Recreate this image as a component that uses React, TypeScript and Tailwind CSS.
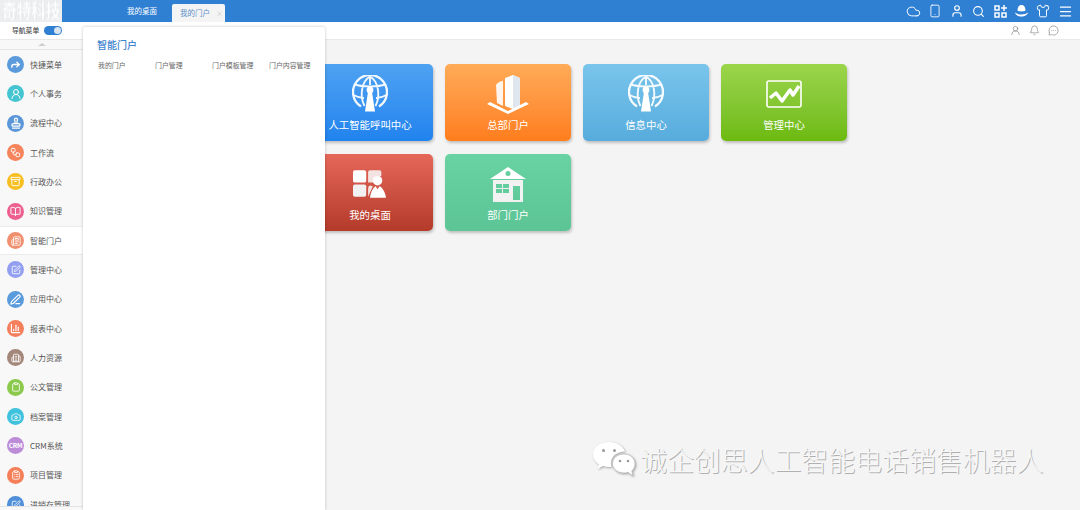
import React from 'react';
import {
  Archive,
  BookOpen,
  Building2,
  Camera,
  ChartColumn,
  Clipboard,
  ClipboardList,
  Cloud,
  Bell,
  Forward,
  Menu,
  MessageCircleMore,
  Newspaper,
  PenLine,
  Search,
  Shirt,
  Smartphone,
  SquarePen,
  Stamp,
  User,
  UserRound,
  Workflow,
} from 'lucide-react';

const menuItems = [
  { label: '快捷菜单', color: 'bg-[#5b9bdc]', icon: <Forward size={11} strokeWidth={3} /> },
  { label: '个人事务', color: 'bg-[#45c4d2]', icon: <UserRound size={12} strokeWidth={2} /> },
  { label: '流程中心', color: 'bg-[#5a96d8]', icon: <Stamp size={12} strokeWidth={2.5} /> },
  { label: '工作流', color: 'bg-[#f5845c]', icon: <Workflow size={11} strokeWidth={2} /> },
  { label: '行政办公', color: 'bg-[#f7bf22]', icon: <Archive size={11} strokeWidth={2} /> },
  { label: '知识管理', color: 'bg-[#ec5f8e]', icon: <BookOpen size={11} strokeWidth={2} /> },
  { label: '智能门户', color: 'bg-[#f0906f]', icon: <Newspaper size={10} strokeWidth={2} />, active: true },
  { label: '管理中心', color: 'bg-[#929ff0]', icon: <SquarePen size={10} strokeWidth={2} /> },
  { label: '应用中心', color: 'bg-[#5a9bdc]', icon: <PenLine size={11} strokeWidth={2.5} /> },
  { label: '报表中心', color: 'bg-[#f47f5c]', icon: <ChartColumn size={11} strokeWidth={2.5} /> },
  { label: '人力资源', color: 'bg-[#a3877b]', icon: <Building2 size={10} strokeWidth={2} /> },
  { label: '公文管理', color: 'bg-[#8bc94d]', icon: <Clipboard size={10} strokeWidth={2} /> },
  { label: '档案管理', color: 'bg-[#3fc2dd]', icon: <Camera size={10} strokeWidth={2} /> },
  { label: 'CRM系统', color: 'bg-[#bd8cd9]', text: 'CRM' },
  { label: '项目管理', color: 'bg-[#f57f59]', icon: <ClipboardList size={10} strokeWidth={2} /> },
  { label: '进销存管理', color: 'bg-[#4f8fd9]', icon: <SquarePen size={10} strokeWidth={2} /> },
];

const subMenu = ['我的门户', '门户管理', '门户模板管理', '门户内容管理'];

const GlobeIcon = () => (
  <svg width="36" height="37" viewBox="0 0 36 37" fill="none" stroke="#fff" strokeOpacity="0.92">
    <path strokeWidth="2.400" d="M9 31.500A17 17 0 1 1 27 31.500" />
    <path strokeWidth="1.900" d="M18 1.500C10 6 7 20 12.500 31M18 1.500C26 6 29 20 23.500 31M18 1.500V10M3 9.500C9 12 27 12 33 9.500M1.500 20C5 22 9 23 12 23M34.500 20C31 22 27 23 24 23" />
    <path fill="#fff" stroke="none" d="M16 17h4l3 19.500H13z" />
    <circle cx="18" cy="15" r="3.400" fill="#fff" stroke="none" />
  </svg>
);

const TowerIcon = () => (
  <svg width="42" height="40" viewBox="0 0 42 40">
    <path fill="#fff" fillOpacity="0.9" d="M9 11q3-4 7-4v25l-6-3z" />
    <path fill="#fff" d="M18 4l8-3 7 3v28l-7 3-8-3z" />
    <path fill="#dfe6ee" d="M26 1l7 3v28l-7 3z" />
    <path fill="#fff" d="M0 30l3-2 18 9 18-9 3 2-21 10z" />
  </svg>
);

const ChartIcon = () => (
  <svg width="36" height="28" viewBox="0 0 36 28" fill="none">
    <rect x="1" y="1" width="34" height="26" rx="2" stroke="#fff" strokeWidth="1.600" />
    <path stroke="#fff" strokeWidth="3.500" strokeLinejoin="round" d="M4 18l6-5 6 8 8-11 3 5 6-9" />
  </svg>
);

const DeskIcon = () => (
  <svg width="34" height="28" viewBox="0 0 36 29">
    <rect x="0" y="0" width="14" height="13" rx="2" fill="#fff" />
    <rect x="0" y="15" width="14" height="13" rx="2" fill="#f1f1f1" />
    <path fill="#f3e4e1" d="M16 2a2 2 0 0 1 2-2h10a2 2 0 0 1 2 2v4a8 8 0 0 0-6 7h-8z" />
    <path fill="#f3e4e1" d="M16 28V19a3 3 0 0 1 2-3l3 1-5 11z" />
    <circle cx="26" cy="11" r="5" fill="#fff" />
    <path fill="#fff" d="M18 29c1-7 4-11 6-12l2 3 2-3c3 1 6 6 7 12z" />
  </svg>
);

const HouseIcon = () => (
  <svg width="36" height="35" viewBox="0 0 36 35" className="mt-[2px]">
    <path fill="#fff" fillRule="evenodd" d="M18 0l18 12H0zM18 4a2.500 2.500 0 1 0 0 5 2.500 2.500 0 0 0 0-5z" />
    <path fill="#f2f2f2" fillRule="evenodd" d="M3 13h30v22H3zM6 17v9h13v-9zM23 19v14h7V19z" />
    <path fill="#f2f2f2" d="M12 17h1v9h-1zM6 21h13v1H6z" />
  </svg>
);

const HatIcon = () => (
  <svg width="15" height="14" viewBox="0 0 15 14" fill="#fff">
    <path d="M3.500 6.500C3.500 3 5 1 7.500 1s4 2 4 5.500c-1.500 1.200-6.500 1.200-8 0z" />
    <path d="M1 8.500c3 2.500 10 2.500 13 0-.5 2.500-3.500 4-6.500 4S1.500 11 1 8.500z" />
  </svg>
);

const AppsIcon = () => (
  <svg width="13" height="13" viewBox="0 0 13 13" fill="none" stroke="#fff" strokeWidth="1.500">
    <rect x="1" y="1" width="4" height="4" />
    <rect x="1" y="8" width="4" height="4" />
    <rect x="8" y="8" width="4" height="4" />
    <path d="M10 0v6M7 3h6" />
  </svg>
);

const WechatIcon = () => (
  <svg width="44" height="38" viewBox="0 0 44 38" className="[filter:drop-shadow(1px_1px_1px_#a5a5a5)]">
    <path fill="#fff" d="M17 1C8 1 1 6.500 1 13.500c0 4 2.500 7.500 6 10l-1.500 4.500 5.500-3c2 .5 4 1 6 1 1 0 2 0 2.500-.2C19 24 19 23 19 22c0-6.500 6-11.500 14-11.500C31 5 24.500 1 17 1z" />
    <circle cx="11.500" cy="9.500" r="1.500" fill="#999" />
    <circle cx="22.500" cy="9.500" r="1.500" fill="#999" />
    <path fill="#fff" stroke="#bbb" strokeWidth="0.800" d="M32 13c-6.500 0-11.500 4-11.500 9.500S25.500 32 32 32c1.500 0 3-.2 4-.7L41 35l-1.200-5c2-1.800 3.200-4.200 3.200-7C43 17 38 13 32 13z" />
    <circle cx="28" cy="20" r="1.300" fill="#999" />
    <circle cx="36" cy="20" r="1.300" fill="#999" />
  </svg>
);

const cards = [
  { label: '人工智能呼叫中心', color: 'from-[#4ea2f2] to-[#2083ee]', icon: <GlobeIcon /> },
  { label: '总部门户', color: 'from-[#ffab57] to-[#ff7d1b]', icon: <TowerIcon /> },
  { label: '信息中心', color: 'from-[#79c5ec] to-[#57acdd]', icon: <GlobeIcon /> },
  { label: '管理中心', color: 'from-[#9bd54b] to-[#6dba0e]', icon: <ChartIcon /> },
  { label: '我的桌面', color: 'from-[#e5675a] to-[#b43a2a]', icon: <DeskIcon /> },
  { label: '部门门户', color: 'from-[#69d3a4] to-[#5cc495]', icon: <HouseIcon /> },
];

const topIcons = [
  <Cloud size={15} strokeWidth={1.5} />,
  <Smartphone size={14} strokeWidth={1.5} />,
  <User size={14} strokeWidth={2} />,
  <Search size={13} strokeWidth={2} />,
  <AppsIcon />,
  <HatIcon />,
  <Shirt size={14} strokeWidth={1.7} />,
  <Menu size={15} strokeWidth={2} />,
];

const App: React.FC = () => {
  return (
    <div className="relative flex h-[510px] w-[1080px] flex-col overflow-hidden bg-[#f4f4f4] font-['Noto_Sans_CJK_SC','Noto_Sans',sans-serif] text-[#555]">
      {/* top bar */}
      <div className="flex h-[22px] shrink-0 items-end bg-[#2f7fd3]">
        <div className="flex h-full w-[62px] items-center justify-center overflow-hidden bg-[#eceef0]">
          <span className="scale-y-125 text-[15px] font-bold tracking-[-0.5px] whitespace-nowrap text-white blur-[0.7px] [text-shadow:0_0_1px_#c4c9cf]">
            奇特科技
          </span>
        </div>
        <div className="ml-[65px] flex h-full items-center text-[7.500px] text-white">我的桌面</div>
        <div className="ml-[15px] flex h-[18px] w-[53px] items-center gap-[6px] rounded-t-[2px] bg-[#f4f4f4] pl-[8px] text-[7.500px] text-[#5b8fc9]">
          我的门户
          <span className="text-[7px] text-[#c9c9c9]">×</span>
        </div>
        <div className="ml-auto flex h-full items-center pr-[4px] text-white">
          {topIcons.map((icon, i) => (
            <span key={i} className="flex w-[21.700px] justify-center">
              {icon}
            </span>
          ))}
        </div>
      </div>

      <div className="flex min-h-0 flex-1">
        {/* nav */}
        <div className="flex w-[83px] shrink-0 flex-col bg-[#f8f8f8]">
          <div className="flex h-[18px] shrink-0 items-center gap-[5px] border-b border-[#e8e8e8] bg-white pl-[12px]">
            <span className="text-[6.800px] font-medium text-[#444]">导航菜单</span>
            <span className="flex h-[9px] w-[18px] items-center justify-end rounded-full bg-[#2f7fd3] pr-[1px]">
              <span className="h-[7px] w-[7px] rounded-full bg-[#d8e4f0]" />
            </span>
          </div>
          <div className="flex h-[10px] shrink-0 items-center justify-center border-b border-[#e6e6e6] bg-[#f8f8f8]">
            <span className="h-0 w-0 border-x-[4px] border-b-[3px] border-x-transparent border-b-[#cfcfcf]" />
          </div>
          <div className="min-h-0 flex-1 overflow-hidden">
            {menuItems.map((item) => (
              <div
                key={item.label}
                className={`flex h-[29.330px] shrink-0 items-center gap-[6px] pl-[7px] text-[8px] whitespace-nowrap ${
                  item.active ? 'border-y border-[#ececec] bg-white' : ''
                }`}
              >
                <span className={`flex h-[17px] w-[17px] shrink-0 items-center justify-center rounded-full text-white ${item.color}`}>
                  {item.icon}
                  {item.text && <span className="text-[6.500px] font-bold tracking-[-0.3px]">{item.text}</span>}
                </span>
                <span>{item.label}</span>
              </div>
            ))}
          </div>
          <div className="h-[4px] shrink-0 border-t border-[#e4e4e4] bg-[#f8f8f8]" />
        </div>

        {/* content */}
        <div className="flex min-w-0 flex-1 flex-col">
          <div className="flex h-[18px] shrink-0 items-center justify-end gap-[8px] border-b border-[#e8e8e8] bg-white pr-[21px] text-[#777]">
            <UserRound size={11} strokeWidth={1.3} />
            <Bell size={11} strokeWidth={1.3} />
            <MessageCircleMore size={11} strokeWidth={1.3} />
          </div>
          <div className="grid grid-cols-[repeat(4,126px)] gap-x-[12px] gap-y-[13px] pt-[24px] pl-[224px]">
            {cards.map((card) => (
              <div
                key={card.label}
                className={`flex h-[77px] flex-col items-center rounded-[5px] bg-gradient-to-b shadow-[1px_2px_3px_rgba(0,0,0,0.22)] ${card.color}`}
              >
                <div className="flex h-[55px] items-center justify-center pt-[4px]">{card.icon}</div>
                <div className="text-[10.400px] leading-[12px] text-white">{card.label}</div>
              </div>
            ))}
          </div>
        </div>
      </div>

      {/* flyout panel over the page */}
      <div className="absolute top-[27px] bottom-0 left-[83px] w-[242px] rounded-t-[2px] bg-white pt-[11px] pl-[14px] shadow-[0_0_3px_rgba(0,0,0,0.25)]">
        <div className="text-[10px] leading-[14px] font-medium text-[#3f84cf]">智能门户</div>
        <div className="mt-[8px] grid grid-cols-[repeat(4,57px)] text-[6.900px] leading-[10px] whitespace-nowrap text-[#666]">
          {subMenu.map((name) => (
            <span key={name} className="pl-[1px]">
              {name}
            </span>
          ))}
        </div>
      </div>

      {/* watermark */}
      <div className="absolute top-[441px] left-[592px] flex items-center gap-[4px]">
        <WechatIcon />
        <span className="text-[26.900px] leading-[38px] font-light whitespace-nowrap text-[#f7f7f7] [text-shadow:1px_1px_0.5px_#b0b0b0]">
          诚企创思人工智能电话销售机器人
        </span>
      </div>
    </div>
  );
};

export default App;
